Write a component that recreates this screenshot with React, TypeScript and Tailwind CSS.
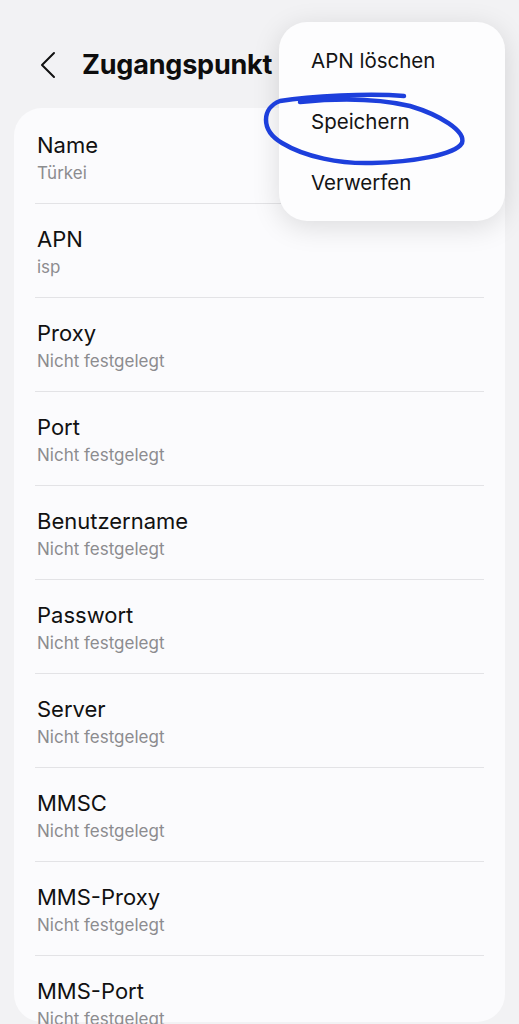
import React from "react";

const rows: { title: string; value: string }[] = [
  { title: "Name", value: "Türkei" },
  { title: "APN", value: "isp" },
  { title: "Proxy", value: "Nicht festgelegt" },
  { title: "Port", value: "Nicht festgelegt" },
  { title: "Benutzername", value: "Nicht festgelegt" },
  { title: "Passwort", value: "Nicht festgelegt" },
  { title: "Server", value: "Nicht festgelegt" },
  { title: "MMSC", value: "Nicht festgelegt" },
  { title: "MMS-Proxy", value: "Nicht festgelegt" },
  { title: "MMS-Port", value: "Nicht festgelegt" },
];

export default function App() {
  return (
    <div
      className="relative h-[1024px] w-[519px] overflow-hidden bg-[#f2f2f4]"
      style={{ fontFamily: "Inter, 'Noto Sans', sans-serif" }}
    >
      {/* Header */}
      <div className="flex h-[108px] items-start pt-[46px] pl-[39px]">
        <div className="flex h-[38px] items-center">
          <svg width="18" height="28" viewBox="0 0 18 28" fill="none">
            <path d="M15 2 L3 14 L15 26" stroke="#111" strokeWidth="2" strokeLinecap="round" strokeLinejoin="round" />
          </svg>
        </div>
        <div className="ml-[25px] text-[27px] font-bold leading-[38px] tracking-[-0.2px] text-[#0d0d0d]">
          Zugangspunkt
        </div>
      </div>

      {/* Card */}
      <div className="mx-[14px] h-[914px] rounded-[28px] bg-[#fbfbfd] px-[21px] pt-[2px]">
        {rows.map((r, i) => (
          <div
            key={r.title}
            className={`flex h-[94px] flex-col pt-[21px] pl-[2px] ${i < rows.length - 1 ? "border-b border-[#e3e3e6]" : ""}`}
          >
            <div className="text-[22px] leading-[28px] text-[#111]">{r.title}</div>
            <div className="text-[17px] leading-[28px] text-[#8c8c8f]">{r.value}</div>
          </div>
        ))}
      </div>

      {/* Popup menu */}
      <div className="absolute left-[279px] top-[22px] h-[199px] w-[226px] rounded-[28px] bg-[#fdfdfe] pt-[9px] pl-[32px] shadow-[0_6px_28px_rgba(0,0,0,0.13)]">
        {["APN löschen", "Speichern", "Verwerfen"].map((t) => (
          <div key={t} className="flex h-[61px] items-center text-[20.5px] text-[#141414]">
            {t}
          </div>
        ))}
      </div>

      {/* Hand-drawn highlight */}
      <svg className="pointer-events-none absolute left-0 top-0" width="519" height="200" viewBox="0 0 519 200" fill="none">
        <path
          d="M404 96 C370 93 310 96 280 101 C262 108 260 130 282 143 C305 157 340 164 372 163 C412 162 455 155 462 143 C466 131 440 115 410 106 C380 99 340 98 300 102"
          stroke="#1d3fdc"
          strokeWidth="4.5"
          strokeLinecap="round"
          strokeLinejoin="round"
        />
      </svg>
    </div>
  );
}
